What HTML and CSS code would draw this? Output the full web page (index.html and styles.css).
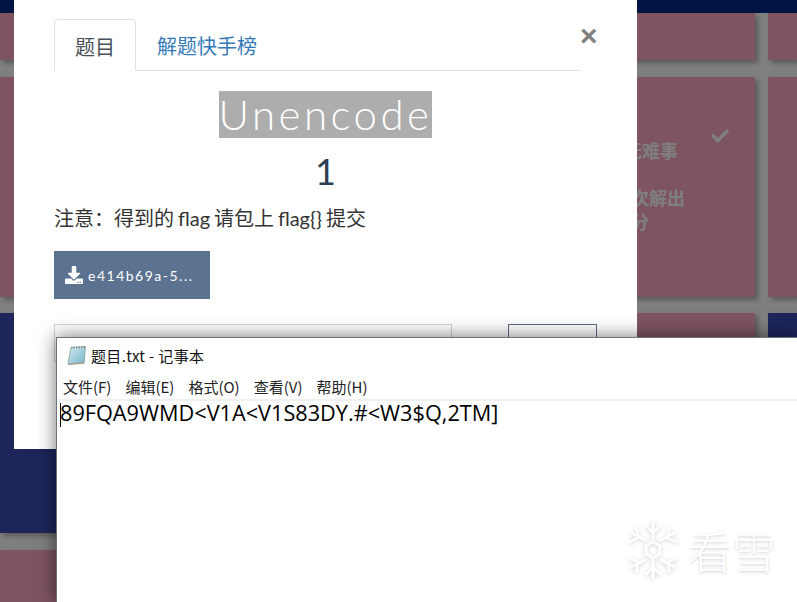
FILE: index.html
```html
<!DOCTYPE html>
<html lang="en">
<head>
    <meta charset="UTF-8">
    <meta name="viewport" content="width=device-width, initial-scale=1.0">
    <title>Unencode</title>
    <link rel="stylesheet" href="styles.css">
</head>
<body>
    <div class="topbar"></div>
    <div class="tiles">
        <div class="tile"></div><div class="tile"></div><div class="tile"></div><div class="tile"></div>
        <div class="tile"></div><div class="tile"></div>
        <div class="tile">
            <svg class="tile-check" viewBox="0 0 512 512"><path d="M173.898 439.404l-166.4-166.4c-9.997-9.997-9.997-26.206 0-36.204l36.203-36.204c9.997-9.998 26.207-9.998 36.204 0L192 312.69 432.095 72.596c9.997-9.997 26.207-9.997 36.204 0l36.203 36.204c9.997 9.997 9.997 26.206 0 36.204l-294.4 294.401c-9.998 9.997-26.207 9.997-36.204-.001z"/></svg>
            <p class="tile-title">无难事</p>
            <p class="tile-note">次解出<br>分</p>
        </div>
        <div class="tile"></div>
        <div class="tile navy"></div><div class="tile"></div><div class="tile"></div><div class="tile navy"></div>
        <div class="tile"></div><div class="tile"></div><div class="tile"></div><div class="tile"></div>
    </div>
    <div class="backdrop"></div>

    <div class="modal">
        <div class="modal-head">
            <ul class="tabs">
                <li class="tab active">题目</li>
                <li class="tab">解题快手榜</li>
            </ul>
            <span class="close">×</span>
        </div>
        <h2 class="name"><span>Unencode</span></h2>
        <div class="value">1</div>
        <p class="desc">注意：得到的 flag 请包上 flag{} 提交</p>
        <a class="file-btn">
            <svg class="file-icon" viewBox="0 0 512 512"><path d="M216 0h80c13.3 0 24 10.7 24 24v168h87.7c17.8 0 26.7 21.5 14.1 34.1L269.7 378.3c-7.5 7.5-19.8 7.5-27.3 0L90.1 226.1c-12.6-12.6-3.7-34.1 14.1-34.1H192V24c0-13.3 10.7-24 24-24zm296 376v112c0 13.3-10.7 24-24 24H24c-13.3 0-24-10.7-24-24V376c0-13.3 10.7-24 24-24h146.7l49 49c20.1 20.1 52.5 20.1 72.6 0l49-49H488c13.3 0 24 10.7 24 24zm-124 88c0-11-9-20-20-20s-20 9-20 20 9 20 20 20 20-9 20-20zm64 0c0-11-9-20-20-20s-20 9-20 20 9 20 20 20 20-9 20-20z"/></svg>
            e414b69a-5...
        </a>
        <div class="answer">
            <div class="answer-input"></div>
            <div class="answer-btn"></div>
        </div>
    </div>

    <div class="notepad">
        <div class="np-title">
            <svg class="np-icon" viewBox="0 0 20 20">
                <defs>
                    <linearGradient id="pad" x1="0" y1="0" x2="1" y2="1">
                        <stop offset="0" stop-color="#d4edf2"/>
                        <stop offset="1" stop-color="#74b4c9"/>
                    </linearGradient>
                </defs>
                <path d="M4 2.5 L18.5 1.5 L17.2 17.5 L1 19 Z" fill="url(#pad)" stroke="#8d9a98" stroke-width="0.8"/>
                <path d="M1 19 L17.2 17.5 L17 18.8 L2 20 Z" fill="#a89a80"/>
                <path d="M4.5 1.8 L18 1 L18 3 L4.2 3.8 Z" fill="#7d8c96"/>
                <path d="M6 1V4M8.5 1V4M11 0.8V3.8M13.5 0.6V3.6M16 0.5V3.4" stroke="#eef3f5" stroke-width="0.8"/>
            </svg>
            <span>题目.txt - 记事本</span>
        </div>
        <div class="np-menu">
            <span>文件(F)</span>
            <span>编辑(E)</span>
            <span>格式(O)</span>
            <span>查看(V)</span>
            <span>帮助(H)</span>
        </div>
        <div class="np-text"><i class="caret"></i>89FQA9WMD&lt;V1A&lt;V1S83DY.#&lt;W3$Q,2TM]</div>
    </div>

    <div class="watermark">
        <svg class="flake" viewBox="2 1 46 58" preserveAspectRatio="none" fill="none" stroke="#fff" stroke-width="2.4">
            <path d="M25 2V22M25 38V58M5 13L19 21M31 39L45 47M45 13L31 21M19 39L5 47"/>
            <path d="M18 6L25 13L32 6M18 54L25 47L32 54M3 23L12 18L10 8M47 37L38 42L40 52M47 23L38 18L40 8M3 37L12 42L10 52"/>
            <path d="M25 22L31 26V34L25 38L19 34V26Z"/>
        </svg>
        <span class="mark-text">看雪</span>
    </div>
</body>
</html>
```
FILE: styles.css
```css
html, body {
    margin: 0;
    height: 100%;
}

body {
    position: relative;
    overflow: hidden;
    background: #fff;
    font-family: "Noto Sans CJK SC", sans-serif;
}

.topbar {
    height: 13px;
    background: #002886;
}

/* tile wall behind the dialog */
.tiles {
    display: grid;
    grid-template-columns: repeat(3, 243px) 1fr;
    grid-template-rows: 47px 220px 220px 1fr;
    column-gap: 13px;
    row-gap: 16.5px;
    height: calc(100% - 13px);
}

.tile {
    position: relative;
    background: #fca8c0;
    color: #fff;
    font-size: 18px;
    font-weight: bold;
    line-height: 24px;
    box-shadow: 3px 3px 5px rgba(0, 0, 0, 0.3);
}

.tile.navy {
    background: #3a4ab6;
}

.tile-check {
    position: absolute;
    top: 50px;
    right: 26px;
    width: 18px;
    height: 18px;
    fill: #fff;
}

.tile-title {
    margin: 61px 0 0 112px;
    white-space: nowrap;
}

.tile-note {
    margin: 23px 0 0 119px;
    white-space: nowrap;
}

.backdrop {
    position: absolute;
    inset: 0;
    background: rgba(0, 0, 0, 0.5);
}

.modal {
    position: absolute;
    top: 0;
    left: 14px;
    box-sizing: border-box;
    width: 623px;
    height: 449px;
    padding: 19px 40px 0;
    background: #fff;
    color: #2c3e50;
    font-family: Lato, "Noto Sans CJK SC", sans-serif;
}

.modal-head {
    display: flex;
}

.tabs {
    flex: 1;
    display: flex;
    margin: 0;
    padding: 0;
    list-style: none;
    border-bottom: 1px solid #dee2e6;
}

.tab {
    height: 51px;
    padding: 0 21px;
    color: #337ab7;
    font-size: 20px;
    line-height: 54px;
}

.tab.active {
    box-sizing: border-box;
    width: 82px;
    height: 52px;
    margin-bottom: -1px;
    padding: 0 20px;
    color: #495057;
    background: #fff;
    border: 1px solid #dee2e6;
    border-bottom-color: #fff;
    border-radius: 4px 4px 0 0;
}

.close {
    width: 17px;
    margin-top: 2px;
    color: #808080;
    font-family: "Liberation Sans", sans-serif;
    font-size: 30px;
    font-weight: bold;
    line-height: 30px;
}

.name {
    margin: 20px 0 0;
    text-align: center;
    font-size: 42px;
    font-weight: 300;
    line-height: 47px;
    letter-spacing: 3.5px;
}

.name span {
    display: inline-block;
    color: #fff;
    background: #adadad;
}

.value {
    margin-top: 8px;
    text-align: center;
    font-size: 36px;
    line-height: 50px;
}

.desc {
    margin: 7px 0 0;
    color: #333;
    font-size: 20px;
    line-height: 30px;
    word-spacing: -1.2px;
}

.file-btn {
    display: flex;
    align-items: center;
    gap: 5px;
    box-sizing: border-box;
    width: 156px;
    height: 48px;
    margin-top: 18px;
    padding-left: 11px;
    color: #fff;
    background: #5b7290;
    font-size: 14px;
    letter-spacing: 1.5px;
}

.file-icon {
    width: 18px;
    height: 18px;
    fill: #fff;
}

.answer {
    display: flex;
    gap: 56px;
    margin-top: 25px;
}

.answer-input {
    box-sizing: border-box;
    width: 398px;
    height: 38px;
    background: #fff;
    border: 1px solid #ced4da;
}

.answer-btn {
    box-sizing: border-box;
    width: 89px;
    height: 38px;
    background: #fff;
    border: 1px solid #5b6b80;
}

/* notepad window on top of the page */
.notepad {
    position: absolute;
    top: 337px;
    left: 56px;
    right: 0;
    bottom: 0;
    background: #fff;
    border-top: 1px solid #6f7478;
    border-left: 1px solid #6f7478;
    box-shadow: 0 0 18px rgba(0, 0, 0, 0.55);
    color: #000;
    font-size: 15px;
}

.np-title {
    display: flex;
    align-items: center;
    gap: 4px;
    box-sizing: border-box;
    height: 36px;
    padding: 0 0 2px 10px;
    color: #111;
    letter-spacing: 0.35px;
}

.np-icon {
    width: 20px;
    height: 20px;
}

.np-menu {
    display: flex;
    gap: 14px;
    height: 25px;
    padding-left: 6px;
    line-height: 25px;
    border-bottom: 2px solid #f0f0f0;
    color: #222;
}

.np-text {
    position: relative;
    padding-left: 3px;
    font-family: "Open Sans", sans-serif;
    font-size: 21.7px;
    line-height: 24px;
    white-space: nowrap;
}

.caret {
    position: absolute;
    top: 2px;
    left: 3px;
    width: 1px;
    height: 24px;
    background: #000;
}

.watermark {
    position: absolute;
    top: 520px;
    left: 627px;
    display: flex;
    align-items: center;
    gap: 9px;
    color: #fff;
}

.flake {
    width: 52px;
    height: 60px;
    filter: drop-shadow(0 1px 2px rgba(0, 0, 0, 0.18));
}

.mark-text {
    font-size: 44px;
    font-weight: 300;
    line-height: 60px;
    text-shadow: 0 1px 3px rgba(0, 0, 0, 0.2);
}
```
